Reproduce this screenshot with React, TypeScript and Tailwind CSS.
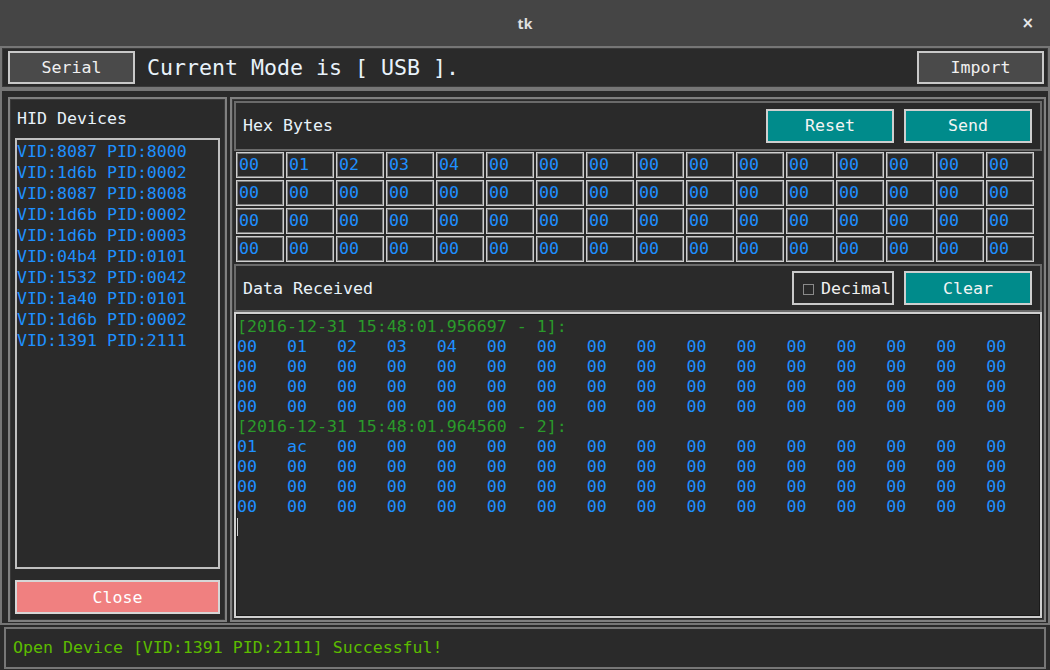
import React from "react";

const devices = [
  "VID:8087 PID:8000",
  "VID:1d6b PID:0002",
  "VID:8087 PID:8008",
  "VID:1d6b PID:0002",
  "VID:1d6b PID:0003",
  "VID:04b4 PID:0101",
  "VID:1532 PID:0042",
  "VID:1a40 PID:0101",
  "VID:1d6b PID:0002",
  "VID:1391 PID:2111",
];

const hexRows: string[][] = [
  ["00", "01", "02", "03", "04", ...Array(11).fill("00")],
  Array(16).fill("00"),
  Array(16).fill("00"),
  Array(16).fill("00"),
];

const zeros = Array(16).fill("00");
const row = (a: string[]) => a.join("   ");

const dataLines: { t: string; g?: boolean }[] = [
  { t: "[2016-12-31 15:48:01.956697 - 1]:", g: true },
  { t: row(["00", "01", "02", "03", "04", ...Array(11).fill("00")]) },
  { t: row(zeros) },
  { t: row(zeros) },
  { t: row(zeros) },
  { t: "[2016-12-31 15:48:01.964560 - 2]:", g: true },
  { t: row(["01", "ac", ...Array(14).fill("00")]) },
  { t: row(zeros) },
  { t: row(zeros) },
  { t: row(zeros) },
];

export default function App() {
  return (
    <div className="w-[1050px] h-[670px] bg-[#2a2a2a] flex flex-col overflow-hidden font-['DejaVu_Sans_Mono',monospace] text-[16.6px]">
      {/* title bar */}
      <div className="h-[46px] shrink-0 bg-[#454545] relative flex items-center justify-center">
        <span className="font-['Noto_Sans',sans-serif] font-bold text-[14px] text-[#e0e0e0]">tk</span>
        <span className="absolute right-[16px] top-[12px] font-['DejaVu_Sans',sans-serif] font-bold text-[15px] text-[#e8e8e8]">×</span>
      </div>

      {/* top frame */}
      <div className="h-[43px] shrink-0 border-2 border-[#767676] shadow-[inset_0_0_0_1px_#3a3a3a] flex items-center pl-[6px] pr-[4px]">
        <div className="w-[127px] h-[33px] bg-[#4a4a4a] border-2 border-[#c9c9c9] flex items-center justify-center pt-[2px] text-[#f0f0f0] leading-none">
          Serial
        </div>
        <div className="ml-[12px] text-[21.6px] text-[#e8f2fa] leading-none pt-[1px]">Current Mode is [ USB ].</div>
        <div className="flex-1" />
        <div className="w-[127px] h-[33px] bg-[#4a4a4a] border-2 border-[#c9c9c9] flex items-center justify-center pt-[2px] text-[#f0f0f0] leading-none">
          Import
        </div>
      </div>

      {/* main frame */}
      <div className="h-[536px] shrink-0 border-2 border-[#767676] flex pl-[6px] pt-[6px] pr-[2px] pb-[1px] gap-[3px]">
        {/* left panel */}
        <div className="w-[219px] h-full border-2 border-[#808080] shadow-[inset_0_0_0_1px_#3a3a3a] flex flex-col pl-[5px]">
          <div className="h-[39px] flex items-center pl-[2px] pt-[1px] text-[#e8f2fa] leading-none">HID Devices</div>
          <div className="w-[205px] h-[431px] border-2 border-[#c0c0c0] pt-[1px] pl-[0px]">
            {devices.map((d, i) => (
              <div key={i} className="h-[21px] leading-[21px] text-[#1e90ff] whitespace-pre">{d}</div>
            ))}
          </div>
          <div className="mt-[11px] w-[205px] h-[34px] bg-[#f08080] border-2 border-[#d6d6d6] flex items-center justify-center pt-[2px] text-white leading-none">
            Close
          </div>
        </div>

        {/* right panel */}
        <div className="flex-1 h-full border-2 border-[#808080] shadow-[inset_0_0_0_1px_#3a3a3a] p-[2px] flex flex-col">
          {/* hex header */}
          <div className="h-[50px] shrink-0 border-2 border-[#6a6a6a] flex items-center pl-[7px] pr-[8px]">
            <span className="text-[#e8f2fa] leading-none">Hex Bytes</span>
            <div className="flex-1" />
            <div className="w-[128px] h-[34px] bg-[#008b8b] border-2 border-[#cfcfcf] flex items-center justify-center text-[#f4f4f4] leading-none">
              Reset
            </div>
            <div className="ml-[10px] w-[128px] h-[34px] bg-[#008b8b] border-2 border-[#cfcfcf] flex items-center justify-center text-[#f4f4f4] leading-none">
              Send
            </div>
          </div>
          {/* hex grid */}
          <div className="flex flex-col gap-[2px] pl-[2px] pt-[1px] shrink-0">
            {hexRows.map((r, ri) => (
              <div key={ri} className="flex gap-[2px]">
                {r.map((v, ci) => (
                  <div
                    key={ci}
                    className="w-[48px] h-[26px] border border-[#cfcfcf] shadow-[inset_0_0_0_1px_#7c7c7c] flex items-center pl-[2px] text-[#1e90ff] leading-none"
                  >
                    {v}
                  </div>
                ))}
              </div>
            ))}
          </div>
          {/* data received header */}
          <div className="mt-[2px] h-[48px] shrink-0 border-2 border-[#6a6a6a] flex items-center pl-[7px] pr-[8px]">
            <span className="text-[#e8f2fa] leading-none pt-[3px]">Data Received</span>
            <div className="flex-1" />
            <div className="w-[102px] h-[34px] border-2 border-[#c9c9c9] flex items-center pl-[9px] pt-[2px] text-[#f0f0f0] leading-none">
              <span className="w-[11px] h-[11px] border border-[#8a8a8a] mr-[7px]" />
              Decimal
            </div>
            <div className="ml-[10px] w-[128px] h-[34px] bg-[#008b8b] border-2 border-[#cfcfcf] flex items-center justify-center pt-[2px] text-[#f4f4f4] leading-none">
              Clear
            </div>
          </div>
          {/* text area */}
          <div className="flex-1 border-2 border-[#cfcfcf] shadow-[inset_0_0_0_1px_#1a1a1a] pl-[1px] pt-[3px]">
            {dataLines.map((l, i) => (
              <div
                key={i}
                className={`h-[20px] leading-[20px] whitespace-pre ${l.g ? "text-[#2a9a2a]" : "text-[#1e90ff]"}`}
              >
                {l.t}
              </div>
            ))}
            <div className="w-[1px] h-[18px] bg-[#d0d0d0] mt-[1px]" />
          </div>
        </div>
      </div>

      {/* status */}
      <div className="mt-[2px] mx-[4px] h-[42px] shrink-0 border-2 border-[#767676] flex items-center pl-[7px] text-[#5cbb00] leading-none">
        Open Device [VID:1391 PID:2111] Successful!
      </div>
    </div>
  );
}
